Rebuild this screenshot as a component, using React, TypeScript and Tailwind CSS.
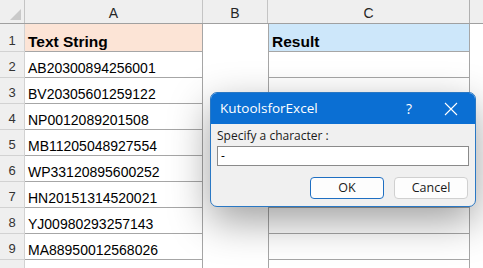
import React from 'react';

const rows = [
  'AB20300894256001',
  'BV20305601259122',
  'NP0012089201508',
  'MB11205048927554',
  'WP33120895600252',
  'HN20151314520021',
  'YJ00980293257143',
  'MA88950012568026',
];

function HeaderRow() {
  return (
    <div className="flex h-[24px] bg-[#efefef] border-b border-[#a0a0a0] text-[14px] leading-[16px] text-[#262626]">
      <div className="relative w-[25px] shrink-0 border-r border-[#c4c4c4]">
        <div className="absolute right-[3px] bottom-[3px] w-0 h-0 border-l-[11px] border-l-transparent border-b-[11px] border-b-[#c9c9c9]" />
      </div>
      <div className="w-[178px] shrink-0 border-r border-[#c4c4c4] flex items-center justify-center pt-[2px]">A</div>
      <div className="w-[65px] shrink-0 border-r border-[#c4c4c4] flex items-center justify-center pt-[2px]">B</div>
      <div className="w-[202px] shrink-0 border-r border-[#b0b0b0] flex items-center justify-center pt-[2px]">C</div>
      <div className="flex-1" />
    </div>
  );
}

function Row({ n, a, c, first }: { n: number; a: string; c?: string; first?: boolean }) {
  const h = first ? 'h-[28px]' : 'h-[26px]';
  return (
    <div className={`flex ${h} leading-[16px]`}>
      <div className="w-[25px] shrink-0 bg-[#efefef] border-r border-[#a0a0a0] border-b border-[#d2d2d2] flex items-end justify-center pb-[2px] text-[13px] text-[#333]">
        {n}
      </div>
      <div
        className={`w-[178px] shrink-0 border-r border-b border-[#a6a6a6] flex items-end pl-[3px] pb-[1px] ${
          first ? 'bg-[#fce4d6] font-bold text-[15.5px] text-black' : 'text-[14px] text-black'
        }`}
      >
        {a}
      </div>
      <div className="w-[65px] shrink-0" />
      <div
        className={`w-[202px] shrink-0 border-l border-r border-b border-[#a6a6a6] flex items-end pl-[3px] pb-[1px] ${
          first ? 'bg-[#cde7fa] font-bold text-[15.5px] text-black' : ''
        }`}
      >
        {c}
      </div>
      <div className="flex-1" />
    </div>
  );
}

function Dialog() {
  return (
    <div
      className="absolute left-[210px] top-[92px] w-[266px] h-[115px] rounded-[7px] border border-[#2a78c4] bg-[#f0f0f0] overflow-hidden shadow-[0_14px_40px_rgba(0,0,0,0.38)]"
      style={{ fontFamily: '"Open Sans", "Noto Sans", sans-serif' }}
    >
      <div className="h-[31px] bg-[#0b6fd3] flex items-center text-white text-[13.5px] pl-[9px]">
        <span className="flex-1">KutoolsforExcel</span>
        <span className="w-[20px] text-center text-[14px] mr-[25px]">?</span>
        <svg width="14" height="14" viewBox="0 0 14 14" className="mr-[17px]">
          <path d="M1 1 L13 13 M13 1 L1 13" stroke="white" strokeWidth="1.1" fill="none" />
        </svg>
      </div>
      <div className="px-[6px] pt-[4px]">
        <div className="text-[12px] text-[#1a1a1a] leading-[16px]">Specify a character :</div>
        <div className="mt-[2px] h-[20px] bg-white border border-[#8a8a8a] flex items-center pl-[3px] text-[12px] text-black leading-none">
          -
        </div>
        <div className="mt-[11px] flex justify-end gap-[10px] pr-[1px]">
          <button className="w-[74px] h-[22px] rounded-[4px] bg-[#fdfdfd] border border-[#1f6fc2] text-[12.5px] text-[#1a1a1a]">
            OK
          </button>
          <button className="w-[74px] h-[22px] rounded-[4px] bg-[#fdfdfd] border border-[#d0d0d0] text-[12.5px] text-[#1a1a1a]">
            Cancel
          </button>
        </div>
      </div>
    </div>
  );
}

export default function App() {
  return (
    <div
      className="relative w-[483px] h-[268px] overflow-hidden bg-white"
      style={{ fontFamily: '"Liberation Sans", Arial, sans-serif' }}
    >
      <HeaderRow />
      <Row n={1} a="Text String" c="Result" first />
      {rows.map((r, i) => (
        <Row key={i} n={i + 2} a={r} />
      ))}
      <Row n={10} a="" />
      <Dialog />
    </div>
  );
}
